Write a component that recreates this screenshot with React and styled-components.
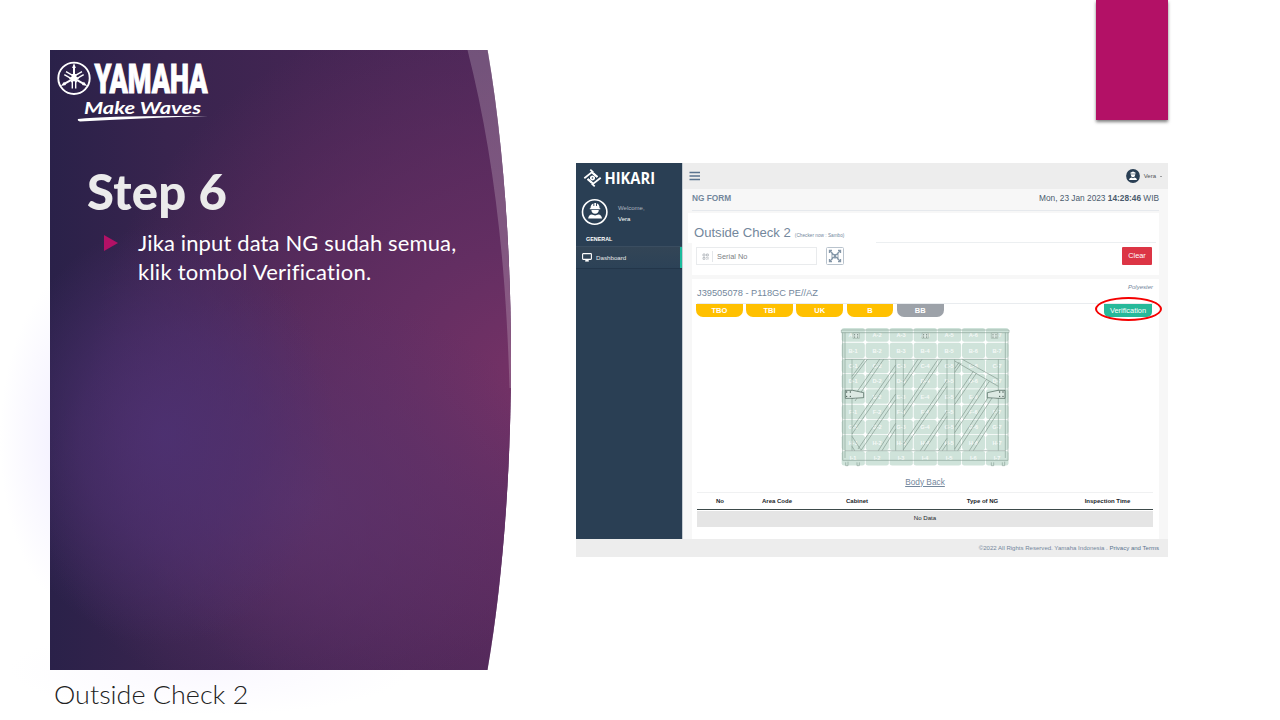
import React from "react";
import styled, { createGlobalStyle } from "styled-components";

const GlobalStyle = createGlobalStyle`
  *, *::before, *::after { box-sizing: border-box; }
  body { margin: 0; background: #fff; }
`;

const Slide = styled.main`
  width: 1280px;
  height: 720px;
  overflow: hidden;
  display: flex;
  padding-left: 50px;
  background:
    radial-gradient(ellipse 82px 170px at 82px 440px, #eee9ff 0%, #f6f4ff 45%, rgba(255, 255, 255, 0) 100%),
    radial-gradient(ellipse 200px 45px at 210px 670px, #faf8ff 0%, rgba(255, 255, 255, 0) 100%),
    #fff;
  font-family: "Liberation Sans", Arial, sans-serif;
`;

const LeftColumn = styled.section`
  width: 526px;
  padding-top: 49.5px;
`;

const Panel = styled.div`
  position: relative;
  width: 462px;
  height: 620px;
  padding: 10px 0 0 6px;
  clip-path: path("M0,0 H437.500 C453,90 461,200 461,310 C461,420 453,530 437.500,620.500 H0 Z");
  background:
    radial-gradient(ellipse 170px 210px at 115px 385px, rgba(77, 49, 114, 0.9) 0%, rgba(76, 48, 112, 0.6) 50%, rgba(76, 48, 112, 0) 100%),
    radial-gradient(ellipse 260px 210px at 250px 450px, rgba(91, 51, 108, 0.85) 0%, rgba(91, 51, 108, 0) 100%),
    radial-gradient(ellipse 450px 390px at 490px 330px, #763266 0%, #632e62 35%, rgba(70, 38, 85, 0) 100%),
    linear-gradient(90deg, #2a2149 0%, #38244e 25%, #432553 55%, #4c2758 100%);
`;

const Sheen = styled.svg`
  position: absolute;
  top: 0;
  left: 0;
`;

const BrandLogo = styled.svg`
  display: block;
  width: 156px;
  height: 64px;
  overflow: visible;
`;

const Heading = styled.h1`
  margin: 32px 0 0 31px;
  height: 70px;
  font: 900 49px/70px Lato, sans-serif;
  color: #ebebeb;
  letter-spacing: 0.3px;
  white-space: nowrap;
`;

const BulletRow = styled.div`
  display: flex;
  margin: 2px 0 0 48px;
`;

const BulletMark = styled.svg`
  width: 14px;
  height: 16px;
  margin: 7px 20px 0 0;
`;

const BulletText = styled.p`
  margin: 0;
  font: 400 22px/29px Lato, sans-serif;
  color: #fff;
  white-space: nowrap;
  letter-spacing: ${(p) => p.$spacing};
`;

const Caption = styled.div`
  margin: 9px 0 0 4px;
  font: 300 24.5px/32px Lato, sans-serif;
  color: #222;
  white-space: nowrap;
  transform-origin: left;
  transform: scaleX(${(p) => p.$stretch});
`;

const RightColumn = styled.section`
  width: 592px;
  display: flex;
  flex-direction: column;
`;

const Ribbon = styled.div`
  align-self: flex-end;
  width: 72px;
  height: 120px;
  background: #b31166;
  box-shadow: 0 2px 3px rgba(0, 0, 0, 0.5);
`;

const AppWindow = styled.div`
  margin-top: 43px;
  width: 592px;
  height: 394px;
  display: flex;
  flex-direction: column;
  background: #f7f7f7;
  color: #73879c;
`;

const AppBody = styled.div`
  display: flex;
  height: 376px;
`;

const Sidebar = styled.aside`
  width: 107px;
  background: #2a3f54;
  border-right: 1px solid #c5ccd2;
  color: #fff;
`;

const SideBrand = styled.svg`
  display: block;
  width: 106px;
  height: 29px;
`;

const Profile = styled.div`
  display: flex;
  height: 41px;
  padding: 6px 0 0 5px;
`;

const ProfileText = styled.div`
  padding: 5px 0 0 9px;
  font-size: 6px;
  line-height: 11px;
  color: #fff;
`;

const Muted = styled.div`
  color: #aab4bf;
`;

const SideLabel = styled.div`
  height: 14px;
  padding-left: 10px;
  font-size: 5.4px;
  font-weight: bold;
  line-height: 13px;
`;

const SideItem = styled.div`
  display: flex;
  align-items: center;
  gap: 4px;
  width: 106px;
  height: 21px;
  padding-left: 6px;
  background: linear-gradient(#334556, #2c4257);
  border-right: 2px solid #1abb9c;
  box-shadow: 0 1px 0 #23364a, 0 -1px 0 #3a4d60;
  font-size: 6.2px;
  color: #e7e7e7;
`;

const Main = styled.div`
  flex: 1;
  display: flex;
  flex-direction: column;
`;

const TopBar = styled.header`
  display: flex;
  align-items: center;
  justify-content: space-between;
  height: 26px;
  padding: 0 6px 0 6px;
  background: #ededed;
`;

const UserMenu = styled.div`
  display: flex;
  align-items: center;
  gap: 4px;
  font-size: 6px;
  color: #515356;
`;

const Caret = styled.span`
  border: 1.8px solid transparent;
  border-top-color: #515356;
  border-bottom-width: 0;
`;

const PageHead = styled.div`
  display: flex;
  justify-content: space-between;
  height: 22px;
  margin: 0 9px;
  font-size: 8.3px;
  line-height: 19px;
  color: #4a5b6d;
  border-bottom: 1px solid #e6e9ed;
`;

const PageTitle = styled.span`
  font-weight: bold;
  color: #73879c;
`;

const Card = styled.section`
  margin: ${(p) => p.$margin};
  height: ${(p) => p.$height};
  background: #fff;
`;

const SearchHead = styled.div`
  display: flex;
  align-items: baseline;
  gap: 4px;
  height: 30px;
  margin-left: -4px;
  padding: 11px 0 0 6px;
  background: #fff;
  font-size: 13.1px;
  line-height: 18px;
  white-space: nowrap;
`;

const Checker = styled.span`
  font-size: 4.7px;
  letter-spacing: 0.02px;
`;

const HeadRule = styled.span`
  align-self: flex-end;
  flex: 1;
  height: 1px;
  margin: 0 3px 0 28px;
  background: #eceff1;
`;

const SearchRow = styled.div`
  display: flex;
  align-items: center;
  padding: 4px 7px 0 4px;
  height: 22px;
`;

const SearchInput = styled.div`
  display: flex;
  align-items: center;
  width: 121px;
  height: 18px;
  padding-left: 5px;
  border: 1px solid #e9ebed;
  font-size: 7.4px;
  color: #7b7f85;
`;

const InputText = styled.span`
  margin-left: 3px;
  padding-left: 4px;
  border-left: 1px solid #e4e7ea;
  line-height: 11px;
`;

const ScanButton = styled.div`
  display: flex;
  align-items: center;
  justify-content: center;
  width: 18px;
  height: 18px;
  margin-left: 8.5px;
  border: 1px solid #b9c3cd;
  border-radius: 1.5px;
`;

const ClearButton = styled.div`
  width: 30px;
  height: 18px;
  margin-left: auto;
  background: #dc3545;
  border-radius: 1px;
  color: #fff;
  font-size: 7.4px;
  line-height: 18px;
  text-align: center;
`;

const UnitHead = styled.div`
  display: flex;
  justify-content: space-between;
  height: 24.5px;
  margin: 0 6px 0 5px;
  border-bottom: 1px solid #e9ecef;
  font-size: 9.28px;
  line-height: 28px;
`;

const Finish = styled.em`
  font-size: 6px;
  line-height: 17px;
`;

const TabRow = styled.div`
  display: flex;
  gap: 3.4px;
  padding: 0 7px 0 4px;
  height: 14px;
`;

const Tab = styled.div`
  width: 46.8px;
  height: 13.5px;
  border-radius: 0 0 7px 7px;
  background: ${(p) => (p.$inactive ? "#9da2a9" : "#ffc000")};
  color: #fff;
  font-size: 7.5px;
  font-weight: bold;
  line-height: 14px;
  text-align: center;
`;

const VerifyTab = styled.div`
  position: relative;
  width: 48px;
  height: 13.5px;
  margin-left: auto;
  border-radius: 0 0 5px 5px;
  background: #26b99a;
  color: #fff;
  font-size: 7.4px;
  line-height: 14px;
  text-align: center;
`;

const Highlight = styled.span`
  position: absolute;
  left: -9px;
  top: -6.5px;
  width: 67px;
  height: 24px;
  border: 2px solid #f40000;
  border-radius: 50%;
`;

const Diagram = styled.svg`
  display: block;
  width: 190px;
  height: 155px;
  margin: 1.5px 0 0.5px 137.5px;
`;

const DiagramName = styled.div`
  width: 466px;
  height: 17px;
  text-align: center;
  text-decoration: underline;
  font-size: 8.3px;
  line-height: 15px;
`;

const Table = styled.div`
  margin: 0.5px 6px 0 5px;
  border-top: 1px solid #f0f1f2;
  font-size: 6.1px;
  color: #212529;
`;

const TableHead = styled.div`
  display: grid;
  grid-template-columns: 46px 68px 92px 159px 91px;
  height: 17px;
  border-bottom: 1px solid #3d4a4a;
  font-weight: bold;
  font-size: 6px;
  line-height: 16px;
  text-align: center;
`;

const EmptyRow = styled.div`
  height: 16px;
  margin-top: 0.5px;
  background: #e5e5e5;
  line-height: 14px;
  text-align: center;
`;

const Footer = styled.footer`
  height: 18px;
  padding-right: 9px;
  background: #ededed;
  font-size: 6.05px;
  line-height: 18px;
  text-align: right;
`;

const FooterLink = styled.span`
  color: #5a738e;
`;

function YamahaLogo() {
  const forks = [0, 120, 240];
  return (
    <BrandLogo viewBox="56 60 156 64" fill="#fff">
      <circle cx="74" cy="78.3" r="15.7" fill="none" stroke="#fff" strokeWidth="1.9" />
      {forks.map((a) => (
        <g key={a} transform={`rotate(${a} 74 78.3)`} stroke="#fff" fill="none">
          <path d="M74 78.3V66" strokeWidth="2" />
          <path d="M74 63l-1.900 5h3.800z" fill="#fff" stroke="none" />
          <path d="M72.300 74v14.500M75.700 74v14.500" strokeWidth="1.400" />
        </g>
      ))}
      <text x="94.5" y="92.8" fontFamily="Roboto, sans-serif" fontWeight="900" fontSize="40" stroke="#fff" strokeWidth="1" textLength="113" lengthAdjust="spacingAndGlyphs">YAMAHA</text>
      <text x="84" y="113.500" fontFamily="Lato, sans-serif" fontWeight="700" fontStyle="italic" fontSize="17" textLength="117" lengthAdjust="spacingAndGlyphs">Make Waves</text>
      <path d="M78 119Q110 115.500 208 116.200Q150 117.600 80 121.500Q77 120.800 78 119z" />
    </BrandLogo>
  );
}

function Avatar() {
  return (
    <svg width="28" height="28" viewBox="0 0 28 28" fill="#fff">
      <circle cx="13.7" cy="14" r="12.2" fill="none" stroke="#fff" strokeWidth="1.6" />
      <path d="M9.5 10.300Q9.800 6.200 12.400 5.600V8h.9V5h1.800v3h.9V5.600Q18.400 6.200 18.600 10.300h.7v1H8.800v-1z" />
      <path d="M10.400 12h7.400q-.3 3.800-3.700 3.800T10.400 12zM7.200 20.500q.2-3.800 3.600-4.100l3.300 1.200 3.300-1.200q3.300.3 3.600 4.100z" />
    </svg>
  );
}

function UserIcon() {
  return (
    <svg width="14" height="14" viewBox="0 0 14 14">
      <circle cx="7" cy="7" r="6.900" fill="#2a3f54" />
      <path d="M4.300 3.800L7 2.600l2.700 1.200-.5 1.200v1Q8.800 8.200 7 8.200T4.800 6V5zM3 11q.3-2.300 2.500-2.400L7 9.300l1.500-.7Q10.700 8.700 11 11z" fill="#fff" />
      <path d="M4.800 5h4.400" stroke="#2a3f54" strokeWidth=".6" />
    </svg>
  );
}

function SidebarLogo() {
  return (
    <SideBrand viewBox="0 0 106 29">
      <g fill="none" stroke="#fff" strokeWidth="1.8" transform="translate(16.5 15)">
        <circle r="1.700" />
        {[0, 180].map((a) => (
          <g key={a} transform={`rotate(${a})`}>
            <path d="M-8.200 0.300L-0.800 -5.600L4.800 -1" />
            <path d="M-2.200 -8.300L0.800 -5.600M-5 1L-0.500 5" />
          </g>
        ))}
      </g>
      <text x="28.500" y="20.700" fill="#fff" fontFamily="'Open Sans', sans-serif" fontWeight="700" fontSize="15.600" textLength="50.500" lengthAdjust="spacingAndGlyphs">HIKARI</text>
    </SideBrand>
  );
}

function MenuIcon() {
  return (
    <svg width="12" height="10" viewBox="0 0 12 10">
      <path d="M.5 1.500h10.500M.5 5h10.500M.5 8.500h10.500" stroke="#5a738e" strokeWidth="1.700" />
    </svg>
  );
}

function MonitorIcon() {
  return (
    <svg width="10" height="9" viewBox="0 0 10 9">
      <rect x=".6" y=".6" width="8.800" height="5.800" rx=".6" fill="none" stroke="#fff" strokeWidth="1.100" />
      <path d="M4 6.500h2l.4 1.500h-2.800z M3 8.200h4" fill="#fff" stroke="#fff" strokeWidth=".6" />
    </svg>
  );
}

function CodeIcon() {
  return (
    <svg width="7" height="7" viewBox="0 0 7 7" fill="none" stroke="#b5babf" strokeWidth=".9">
      <path d="M1 1h2v2h-2zM4.500 1h1.800v2h-1.800zM1 4.500h2v1.800h-2zM4.200 4.500h1M6 4v2.500M4.200 6.200h1" />
    </svg>
  );
}

function ScanIcon() {
  return (
    <svg width="14" height="14" viewBox="0 0 14 14" fill="none" stroke="#8496a8" strokeWidth="1.300">
      <path d="M1.500 4V1.500h2.500M10 1.500h2.500v2.500M12.500 10v2.500h-2.500M4 12.500h-2.500v-2.500" />
      <path d="M2 2l10 10M12 2L2 12" strokeWidth="1.100" />
      <path d="M4 3.500v7M10 3.500v7M4 5.500h6M4 8.500h6M7 5v5" strokeWidth=".9" />
    </svg>
  );
}

const columnEdges = [34, 106, 178, 250, 322, 395, 467, 537];
const rowEdges = [26, 70, 119, 164, 210, 256, 302, 347, 395, 441];
const rowNames = "ABCDEFGHI".split("");
const slats = [
  [66, 172, 104, 121], [66, 182, 112, 121],
  [66, 240, 149, 121], [75, 246, 161, 121],
  [66, 328, 197, 138], [66, 345, 197, 157],
  [84, 390, 197, 225], [93, 394, 197, 242],
  [145, 395, 197, 313], [156, 395, 197, 330],
  [220, 188, 264, 121], [220, 202, 276, 121],
  [220, 277, 324, 121], [220, 294, 336, 121],
  [220, 376, 351, 184], [220, 392, 351, 202],
  [271, 395, 351, 276], [283, 395, 351, 292],
  [326, 395, 351, 358], [337, 395, 351, 374],
  [374, 149, 388, 129], [374, 160, 394, 132],
  [374, 240, 430, 157], [374, 257, 439, 163],
  [374, 325, 469, 181], [374, 341, 478, 187],
  [374, 390, 474, 236], [383, 395, 486, 237],
  [418, 395, 505, 261], [430, 395, 505, 278],
  [374, 126, 505, 202], [397, 121, 505, 181],
  [66, 352, 92, 392], [66, 382, 74, 395],
];

function BodyBackDiagram() {
  return (
    <Diagram viewBox="0 0 570 465">
      {rowNames.map((row, r) =>
        columnEdges.slice(0, 7).map((x, c) => (
          <rect key={row + c} x={x + 1} y={rowEdges[r] + 1} width={columnEdges[c + 1] - x - 2.5} height={rowEdges[r + 1] - rowEdges[r] - 2.5} rx="7" fill="#cfe3da" />
        ))
      )}
      <g fill="#fff" fontFamily="'Liberation Sans', sans-serif" fontWeight="700" fontSize="17" textAnchor="middle" opacity=".8">
        {rowNames.map((row, r) =>
          columnEdges.slice(0, 7).map((x, c) => (
            <text key={row + c} x={(x + columnEdges[c + 1]) / 2 - 1} y={(rowEdges[r] + rowEdges[r + 1]) / 2 + 6}>{`${row}-${c + 1}`}</text>
          ))
        )}
      </g>
      <g fill="none" stroke="#7f998d" strokeWidth="1.700">
        <path d="M34 33H537V41H34zM38 41V424H534V41M45 41V417M526 41V417M45 121H526M45 395H526M66 121V395M505 121V395M197 121V395M220 121V395M351 121V395M374 121V395" />
        <path d="M47 430v10h7v-12M81 430v10h7v-10M484 430v10h7v-10M517 430v10h7v-12" />
      </g>
      <g stroke="#788f84" strokeWidth="1.800">
        {slats.map((s) => (
          <line key={s.join()} x1={s[0]} y1={s[1]} x2={s[2]} y2={s[3]} />
        ))}
      </g>
      <g fill="#dce9e3" stroke="#435c51" strokeWidth="2">
        <path d="M46 214H68L101 221V236L68 238H46zM525 214H504L472 221V236L504 238H525z" />
        <path d="M69 42h19v16H69zM276 42h19v16h-19zM484 42h19v16h-19z" stroke="#8da297" strokeWidth="1.500" />
      </g>
      <g fill="#394e45">
        {[50, 61, 509, 519].map((x) => (
          <g key={x}>
            <circle cx={x} cy="219" r="2" />
            <circle cx={x} cy="232" r="2" />
          </g>
        ))}
        {[74, 83, 281, 290, 489, 498].map((x) => (
          <g key={x}>
            <circle cx={x} cy="47" r="1.600" />
            <circle cx={x} cy="54" r="1.600" />
          </g>
        ))}
      </g>
    </Diagram>
  );
}

const tabs = ["TBO", "TBI", "UK", "B", "BB"];
const headers = ["No", "Area Code", "Cabinet", "Type of NG", "Inspection Time"];

export default function App() {
  return (
    <>
      <GlobalStyle />
      <Slide>
        <LeftColumn>
          <Panel>
            <Sheen width="462" height="620">
              <path d="M417.500 0H438C453 90 462 200 462 310V338H459.500C456 210 443 100 417.500 0z" fill="#fff" opacity=".2" />
            </Sheen>
            <YamahaLogo />
            <Heading>Step 6</Heading>
            <BulletRow>
              <BulletMark viewBox="0 0 14 16"><path d="M0 0L14 8L0 16z" fill="#b31166" /></BulletMark>
              <div>
                <BulletText $spacing="0.130px">Jika input data NG sudah semua,</BulletText>
                <BulletText $spacing="0.250px">klik tombol Verification.</BulletText>
              </div>
            </BulletRow>
          </Panel>
          <Caption $stretch={1.1}>Outside Check 2</Caption>
        </LeftColumn>
        <RightColumn>
          <Ribbon />
          <AppWindow>
            <AppBody>
              <Sidebar>
                <SidebarLogo />
                <Profile>
                  <Avatar />
                  <ProfileText><Muted>Welcome,</Muted>Vera</ProfileText>
                </Profile>
                <SideLabel>GENERAL</SideLabel>
                <SideItem><MonitorIcon />Dashboard</SideItem>
              </Sidebar>
              <Main>
                <TopBar>
                  <MenuIcon />
                  <UserMenu><UserIcon />Vera<Caret /></UserMenu>
                </TopBar>
                <PageHead>
                  <PageTitle>NG FORM</PageTitle>
                  <span>Mon, 23 Jan 2023 <b>14:28:46</b> WIB</span>
                </PageHead>
                <Card $margin="2px 9px 0 9px" $height="62px">
                  <SearchHead>
                    Outside Check 2<Checker>(Checker now : Sambo)</Checker>
                    <HeadRule />
                  </SearchHead>
                  <SearchRow>
                    <SearchInput><CodeIcon /><InputText>Serial No</InputText></SearchInput>
                    <ScanButton><ScanIcon /></ScanButton>
                    <ClearButton>Clear</ClearButton>
                  </SearchRow>
                </Card>
                <Card $margin="4px 9px 0 9px" $height="260px">
                  <UnitHead>J39505078 - P118GC PE//AZ<Finish>Polyester</Finish></UnitHead>
                  <TabRow>
                    {tabs.map((t) => <Tab key={t} $inactive={t === "BB"}>{t}</Tab>)}
                    <VerifyTab>Verification<Highlight /></VerifyTab>
                  </TabRow>
                  <BodyBackDiagram />
                  <DiagramName>Body Back</DiagramName>
                  <Table>
                    <TableHead>{headers.map((h) => <span key={h}>{h}</span>)}</TableHead>
                    <EmptyRow>No Data</EmptyRow>
                  </Table>
                </Card>
              </Main>
            </AppBody>
            <Footer>©2022 All Rights Reserved. Yamaha Indonesia . <FooterLink>Privacy and Terms</FooterLink></Footer>
          </AppWindow>
        </RightColumn>
      </Slide>
    </>
  );
}
